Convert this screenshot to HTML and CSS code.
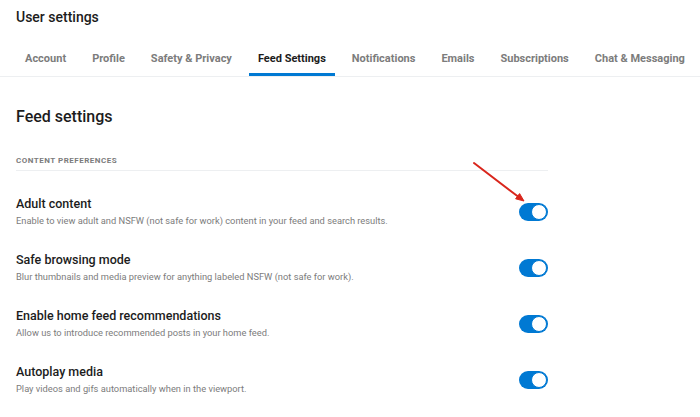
FILE: index.html
```html
<!DOCTYPE html>
<html lang="en">
<head>
    <meta charset="UTF-8">
    <title>User settings</title>
    <link rel="stylesheet" href="styles.css">
</head>
<body>
    <h1 class="page-title">User settings</h1>
    <nav class="tabs">
        <a class="tab">Account</a>
        <a class="tab">Profile</a>
        <a class="tab">Safety &amp; Privacy</a>
        <a class="tab active">Feed Settings</a>
        <a class="tab">Notifications</a>
        <a class="tab">Emails</a>
        <a class="tab">Subscriptions</a>
        <a class="tab">Chat &amp; Messaging</a>
    </nav>

    <div class="content">
        <h2>Feed settings</h2>
        <h3 class="section-label">Content preferences</h3>

        <div class="setting first">
            <div class="setting-text">
                <div class="setting-title">Adult content</div>
                <div class="setting-desc">Enable to view adult and NSFW (not safe for work) content in your feed and search results.</div>
            </div>
            <button class="toggle"><span class="knob"></span></button>
            <svg class="arrow" width="60" height="50" viewBox="0 0 60 50">
                <line x1="3" y1="3" x2="47" y2="36.5" stroke="#d9261c" stroke-width="2" stroke-linecap="round"/>
                <polygon points="53,41 44.6,38.8 48.6,33.6" fill="#d9261c" stroke="#d9261c" stroke-width="1" stroke-linejoin="round"/>
            </svg>
        </div>

        <div class="setting">
            <div class="setting-text">
                <div class="setting-title">Safe browsing mode</div>
                <div class="setting-desc">Blur thumbnails and media preview for anything labeled NSFW (not safe for work).</div>
            </div>
            <button class="toggle"><span class="knob"></span></button>
        </div>

        <div class="setting">
            <div class="setting-text">
                <div class="setting-title">Enable home feed recommendations</div>
                <div class="setting-desc">Allow us to introduce recommended posts in your home feed.</div>
            </div>
            <button class="toggle"><span class="knob"></span></button>
        </div>

        <div class="setting">
            <div class="setting-text">
                <div class="setting-title">Autoplay media</div>
                <div class="setting-desc">Play videos and gifs automatically when in the viewport.</div>
            </div>
            <button class="toggle"><span class="knob"></span></button>
        </div>
    </div>
</body>
</html>
```

FILE: styles.css
```css
* {
    box-sizing: border-box;
    margin: 0;
    padding: 0;
    font-family: Roboto, Arial, sans-serif;
}
body {
    background-color: #fff;
    color: #1c1c1c;
    overflow: hidden;
}
.page-title {
    font-size: 14px;
    font-weight: 500;
    line-height: 20px;
    margin: 7px 0 0 16px;
    color: #1c1c1c;
}
.tabs {
    display: flex;
    margin-top: 15px;
    padding-left: 16px;
    border-bottom: 1px solid #edeff1;
}
.tab {
    font-size: 11px;
    font-weight: 700;
    color: #7c7c7c;
    padding: 9px 9px 7px;
    margin-right: 8px;
    line-height: 15px;
    border-bottom: 3px solid transparent;
    white-space: nowrap;
}
.tab.active {
    color: #1c1c1c;
    border-bottom-color: #0079d3;
}
.content {
    width: 548px;
    padding-left: 16px;
}
h2 {
    font-size: 16px;
    font-weight: 500;
    line-height: 22px;
    margin-top: 29px;
    color: #1c1c1c;
}
.section-label {
    font-size: 8px;
    font-weight: 700;
    letter-spacing: 0.5px;
    text-transform: uppercase;
    color: #7c7c7c;
    margin-top: 27px;
    padding-bottom: 4px;
    border-bottom: 1px solid #edeff1;
    line-height: 11px;
}
.setting {
    position: relative;
    display: flex;
    align-items: center;
    justify-content: space-between;
    margin-top: 23px;
}
.setting.first {
    margin-top: 24px;
}
.setting-title {
    font-size: 12.5px;
    font-weight: 500;
    line-height: 17px;
}
.setting-desc {
    font-size: 9.3px;
    color: #7c7c7c;
    line-height: 14px;
    margin-top: 2px;
}
.toggle {
    position: relative;
    width: 29px;
    height: 18px;
    border: none;
    border-radius: 9px;
    background-color: #0079d3;
}
.knob {
    position: absolute;
    right: 1px;
    top: 1px;
    width: 16px;
    height: 16px;
    border-radius: 50%;
    background-color: #fff;
    border: 1px solid #0079d3;
}
.arrow {
    position: absolute;
    left: 455px;
    top: -35px;
}
```
